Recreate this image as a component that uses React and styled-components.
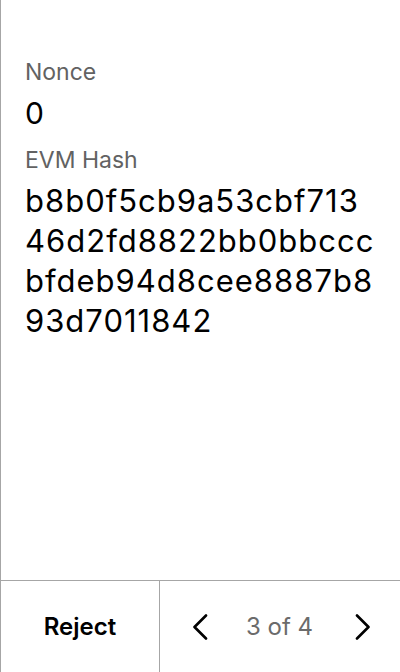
import React from "react";
import styled, { createGlobalStyle } from "styled-components";

const GlobalStyle = createGlobalStyle`
  html, body {
    margin: 0;
    padding: 0;
    background: #fff;
  }
  body {
    font-family: "Inter", "Liberation Sans", sans-serif;
  }
`;

const Screen = styled.div`
  width: 400px;
  height: 672px;
  box-sizing: border-box;
  border-left: 1px solid #a6a6a6;
  display: flex;
  flex-direction: column;
  background: #fff;
`;

const Details = styled.div`
  flex: 1;
  padding: 57px 24px 0 24px;
  display: flex;
  flex-direction: column;
`;

const Label = styled.div`
  font-size: 23px;
  line-height: 30px;
  color: #626262;
  margin-top: ${(p) => p.$gap || 0}px;
`;

const Value = styled.div`
  font-size: ${(p) => p.$size || 31}px;
  letter-spacing: ${(p) => p.$track || 0}px;
  line-height: 40px;
  color: #000;
  margin-top: 6px;
`;

const Footer = styled.div`
  height: 92px;
  border-top: 1px solid #a6a6a6;
  display: grid;
  grid-template-columns: 159px 1fr;
  box-sizing: border-box;
`;

const RejectButton = styled.button`
  border: none;
  border-right: 1px solid #a6a6a6;
  background: none;
  font-family: inherit;
  font-size: 24px;
  font-weight: 600;
  color: #000;
  padding: 0;
  cursor: pointer;
`;

const Pager = styled.div`
  display: flex;
  align-items: center;
  justify-content: space-between;
  padding: 0 28px 0 31px;
`;

const NavButton = styled.button`
  border: none;
  background: none;
  padding: 0;
  width: 18px;
  height: 28px;
  display: flex;
  align-items: center;
  justify-content: center;
  cursor: pointer;
`;

const PageText = styled.span`
  font-size: 24px;
  color: #6b6b6b;
  margin-right: 4px;
`;

const Chevron = ({ dir }) => (
  <svg width="16" height="26" viewBox="0 0 16 26" fill="none">
    <path
      d={dir === "left" ? "M14 1.5 L2.5 13 L14 24.5" : "M2 1.5 L13.5 13 L2 24.5"}
      stroke="#000"
      strokeWidth="2.6"
      strokeLinecap="round"
      strokeLinejoin="round"
    />
  </svg>
);

const hash = "b8b0f5cb9a53cbf71346d2fd8822bb0bbcccbfdeb94d8cee8887b893d7011842";
const hashLines = hash.match(/.{1,18}/g);

export default function App() {
  return (
    <>
      <GlobalStyle />
      <Screen>
        <Details>
          <Label>Nonce</Label>
          <Value $size={30}>0</Value>
          <Label $gap={12}>EVM Hash</Label>
          <Value $track={1}>
            {hashLines.map((line) => (
              <div key={line}>{line}</div>
            ))}
          </Value>
        </Details>
        <Footer>
          <RejectButton>Reject</RejectButton>
          <Pager>
            <NavButton aria-label="Previous">
              <Chevron dir="left" />
            </NavButton>
            <PageText>3 of 4</PageText>
            <NavButton aria-label="Next">
              <Chevron dir="right" />
            </NavButton>
          </Pager>
        </Footer>
      </Screen>
    </>
  );
}
